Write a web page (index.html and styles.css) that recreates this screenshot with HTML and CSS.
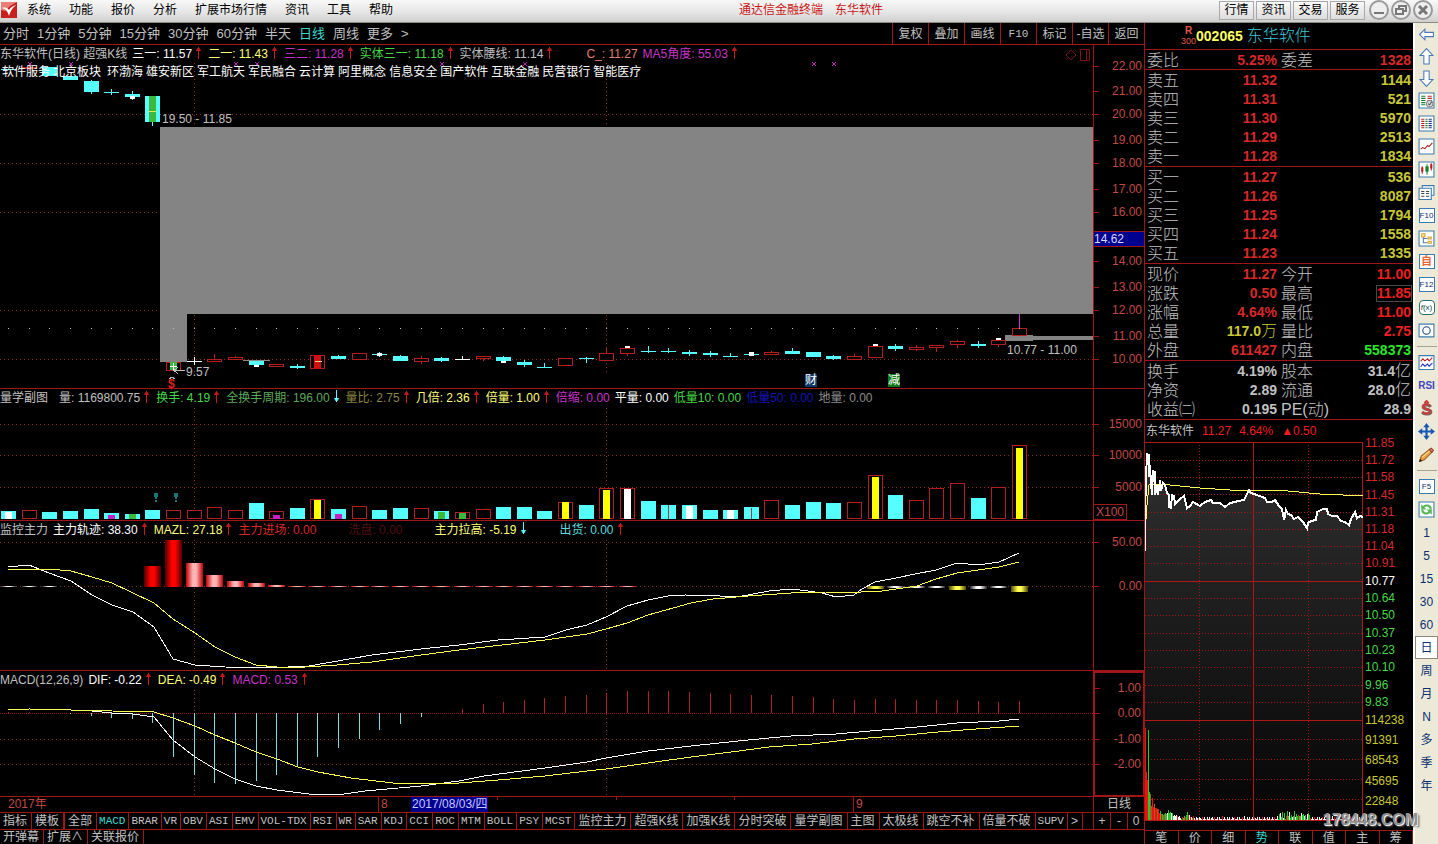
FILE: index.html
```html
<!DOCTYPE html>
<html lang="zh-CN">
<head>
<meta charset="utf-8">
<title>通达信金融终端 东华软件</title>
<link rel="stylesheet" href="styles.css">
</head>
<body>
<svg class="defs" aria-hidden="true">
  <symbol id="up" viewBox="0 0 7 13"><path d="M3.5 13V1M1.5 4.5l2-3 2 3z" fill="#c81818" stroke="#c81818"/></symbol>
  <symbol id="down" viewBox="0 0 7 13"><path d="M3.5 0v12M1.5 8.500l2 3 2-3z" fill="#5ff" stroke="#5ff"/></symbol>
</svg>
<div class="app">
  <header class="titlebar">
    <svg class="logo" viewBox="0 0 16 16"><rect width="16" height="16" fill="#c8201c"/><path d="M0 0h16L9 4 4 9 0 8z" fill="#e88078"/><path d="M1 6c3-1 6 0 7 2 2-3 4-4 7-5-4 3-6 7-7 11C7 10 5 7 1 6z" fill="#fff"/></svg>
    <nav class="menu">
      <button>系统</button><button>功能</button><button>报价</button><button>分析</button><button>扩展市场行情</button><button>资讯</button><button>工具</button><button>帮助</button>
    </nav>
    <h1 class="title"><span>通达信金融终端</span><span>东华软件</span></h1>
    <div class="modes"><button>行情</button><button>资讯</button><button>交易</button><button>服务</button></div>
    <div class="winctl">
      <button aria-label="最小化"><svg viewBox="0 0 20 20"><circle cx="10" cy="10" r="9"/><path d="M5 13h10" stroke-width="2"/></svg></button>
      <button aria-label="还原"><svg viewBox="0 0 20 20"><circle cx="10" cy="10" r="9"/><path d="M5 9h7v5H5zM8 9V6h7v5h-3" stroke-width="2"/></svg></button>
      <button aria-label="关闭"><svg viewBox="0 0 20 20"><circle cx="10" cy="10" r="9"/><path d="M6 6l8 8M14 6l-8 8" stroke-width="3"/></svg></button>
    </div>
  </header>

  <main class="main">
    <div class="periods">
      <nav class="period-list">
        <button>分时</button><button>1分钟</button><button>5分钟</button><button>15分钟</button><button>30分钟</button><button>60分钟</button><button>半天</button><button class="active">日线</button><button>周线</button><button>更多</button><button>&gt;</button>
      </nav>
      <div class="period-tools"><button>复权</button><button>叠加</button><button>画线</button><button class="song">F10</button><button>标记</button><button>-自选</button><button>返回</button></div>
    </div>

    <section class="pane price">
      <div class="plot" id="price">
        <div class="legend">
          <span>东华软件(日线) 超强K线</span>
          <span class="white">三一: 11.57<svg class="arr"><use href="#up"/></svg></span>
          <span class="yellow">二一: 11.43<svg class="arr"><use href="#up"/></svg></span>
          <span class="magenta">三二: 11.28<svg class="arr"><use href="#up"/></svg></span>
          <span class="green">实体三一: 11.18<svg class="arr"><use href="#up"/></svg></span>
          <span>实体腰线: 11.14<svg class="arr"><use href="#up"/></svg></span>
          <span class="salmon spaced">C_: 11.27</span>
          <span class="magenta">MA5角度: 55.03<svg class="arr"><use href="#up"/></svg></span>
          <svg class="corner" viewBox="0 0 28 12"><path d="M7 1l5 5-5 5-5-5zM16.500 .5h9v11h-9zM22.500 .5v11" fill="none" stroke="#801414"/></svg>
        </div>
        <div class="concepts"><span>软件服务</span><span>北京板块</span><span></span><span>环渤海</span><span>雄安新区</span><span>军工航天</span><span>军民融合</span><span>云计算</span><span>阿里概念</span><span>信息安全</span><span>国产软件</span><span>互联金融</span><span>民营银行</span><span>智能医疗</span></div>
      </div>
      <div class="axis" id="price-axis"></div>
    </section>

    <section class="pane volume">
      <div class="plot" id="volume">
        <div class="legend">
          <span>量学副图</span>
          <span class="lead">量: 1169800.75<svg class="arr"><use href="#up"/></svg></span>
          <span class="green">换手: 4.19<svg class="arr"><use href="#up"/></svg></span>
          <span class="sage">全换手周期: 196.00<svg class="arr"><use href="#down"/></svg></span>
          <span class="olive">量比: 2.75<svg class="arr"><use href="#up"/></svg></span>
          <span class="yellow">几倍: 2.36<svg class="arr"><use href="#up"/></svg></span>
          <span class="yellow">倍量: 1.00<svg class="arr"><use href="#up"/></svg></span>
          <span class="magenta">倍缩: 0.00</span>
          <span class="white">平量: 0.00</span>
          <span class="green">低量10: 0.00</span>
          <span class="blue">低量50: 0.00</span>
          <span class="gray">地量: 0.00</span>
        </div>
      </div>
      <div class="axis" id="volume-axis"><span class="unit">X100</span></div>
    </section>

    <section class="pane monitor">
      <div class="plot" id="monitor">
        <div class="legend">
          <span>监控主力</span>
          <span class="white">主力轨迹: 38.30<svg class="arr"><use href="#up"/></svg></span>
          <span class="yellow">MAZL: 27.18<svg class="arr"><use href="#up"/></svg></span>
          <span class="red">主力进场: 0.00</span>
          <span class="dark spaced">洗盘: 0.00</span>
          <span class="yellow spaced">主力拉高: -5.19<svg class="arr"><use href="#down"/></svg></span>
          <span class="cyan spaced">出货: 0.00<svg class="arr"><use href="#up"/></svg></span>
        </div>
      </div>
      <div class="axis" id="monitor-axis"></div>
    </section>

    <section class="pane macd">
      <div class="plot" id="macd">
        <div class="legend">
          <span>MACD(12,26,9)</span>
          <span class="white">DIF: -0.22<svg class="arr"><use href="#up"/></svg></span>
          <span class="yellow">DEA: -0.49<svg class="arr"><use href="#up"/></svg></span>
          <span class="magenta">MACD: 0.53<svg class="arr"><use href="#up"/></svg></span>
        </div>
      </div>
      <div class="axis" id="macd-axis"></div>
    </section>

    <div class="dates">
      <div class="dateline" id="dates"></div>
      <span class="cycle">日线</span>
    </div>

    <div class="tabs">
      <nav class="tablist" id="tabs"></nav>
      <div class="steps"><button>+</button><button>-</button><button>0</button></div>
    </div>
    <nav class="footer"><button>开弹幕</button><button>扩展∧</button><button>关联报价</button></nav>
  </main>

  <aside class="quote">
    <div class="stock"><span class="flag"><b>R</b><i>300</i></span><strong>002065</strong><span class="name">东华软件</span></div>
    <table class="book">
      <colgroup><col class="lab"><col><col class="lab"><col></colgroup>
      <tbody>
        <tr class="single"><th>委比</th><td class="red">5.25%</td><th>委差</th><td class="red">1328</td></tr>
        <tr><th>卖五</th><td class="red">11.32</td><td colspan="2" class="qty">1144</td></tr>
        <tr><th>卖四</th><td class="red">11.31</td><td colspan="2" class="qty">521</td></tr>
        <tr><th>卖三</th><td class="red">11.30</td><td colspan="2" class="qty">5970</td></tr>
        <tr><th>卖二</th><td class="red">11.29</td><td colspan="2" class="qty">2513</td></tr>
        <tr class="end"><th>卖一</th><td class="red">11.28</td><td colspan="2" class="qty">1834</td></tr>
        <tr><th>买一</th><td class="red">11.27</td><td colspan="2" class="qty">536</td></tr>
        <tr><th>买二</th><td class="red">11.26</td><td colspan="2" class="qty">8087</td></tr>
        <tr><th>买三</th><td class="red">11.25</td><td colspan="2" class="qty">1794</td></tr>
        <tr><th>买四</th><td class="red">11.24</td><td colspan="2" class="qty">1558</td></tr>
        <tr class="end"><th>买五</th><td class="red">11.23</td><td colspan="2" class="qty">1335</td></tr>
        <tr><th>现价</th><td class="red">11.27</td><th>今开</th><td class="bright">11.00</td></tr>
        <tr><th>涨跌</th><td class="red">0.50</td><th>最高</th><td class="bright"><span class="boxed">11.85</span></td></tr>
        <tr><th>涨幅</th><td class="red">4.64%</td><th>最低</th><td class="bright">11.00</td></tr>
        <tr><th>总量</th><td class="qty">117.0<small>万</small></td><th>量比</th><td class="bright">2.75</td></tr>
        <tr class="end"><th>外盘</th><td class="red">611427</td><th>内盘</th><td class="lime">558373</td></tr>
        <tr><th>换手</th><td>4.19%</td><th>股本</th><td>31.4<small>亿</small></td></tr>
        <tr><th>净资</th><td>2.89</td><th>流通</th><td>28.0<small>亿</small></td></tr>
        <tr class="end"><th>收益㈡</th><td>0.195</td><th>PE(动)</th><td>28.9</td></tr>
      </tbody>
    </table>
    <div class="mini-head"><span>东华软件</span><span class="bright">11.27</span><span class="bright">4.64%</span><span class="bright">▲0.50</span></div>
    <div class="mini">
      <div class="mini-plot" id="mini"></div>
      <div class="mini-axis" id="mini-axis"></div>
    </div>
    <nav class="quote-tabs"><button>笔</button><button>价</button><button>细</button><button class="active">势</button><button>联</button><button>值</button><button>主</button><button>筹</button></nav>
    <span class="mark">178448.COM</span>
  </aside>

  <nav class="toolbar">
    <button class="arrow" aria-label="左"><svg viewBox="0 0 16 16"><path d="M1.500 8l5-5v3h8v4h-8v3z" fill="#fff" stroke="#4a7ab8"/></svg></button>
    <button class="arrow" aria-label="上"><svg viewBox="0 0 16 16"><path d="M8 .5l6 6.500h-3.500v8h-5V7H2z" fill="#fff" stroke="#4a7ab8"/></svg></button>
    <button class="arrow" aria-label="下"><svg viewBox="0 0 16 16"><path d="M8 15.500l6-6.500h-3.500V1h-5v8H2z" fill="#fff" stroke="#4a7ab8"/></svg></button>
    <button aria-label="报表"><svg viewBox="0 0 16 16"><path d="M1 1h14v14H1z" class="fr"/><path d="M3 4h4M3 6h4M3 8h4M3 10h4M3 12h4" stroke="#188038"/><path d="M9 4h4M9 6h4" stroke="#c02020"/><path d="M9 8h4" stroke="#203080"/><circle cx="11" cy="11" r="3" fill="#ddd" stroke="#888"/><path d="M9.500 11l1.500 1 2-3" fill="none" stroke="#555"/></svg></button>
    <button aria-label="列表"><svg viewBox="0 0 16 16"><path d="M1 1h14v14H1z" class="fr"/><path d="M3 4h3M3 6h3M3 8h3M3 10h3M3 12h3" stroke="#c02020"/><path d="M7 4h2M7 6h2M7 8h2M7 10h2M7 12h2" stroke="#188038"/><path d="M10 4h3M10 6h3M10 8h3M10 10h3M10 12h3" stroke="#203080"/></svg></button>
    <button aria-label="走势"><svg viewBox="0 0 16 16"><path d="M1 1h14v14H1z" class="fr"/><path d="M2.500 10.500l2-1.500 2 1 2.500-3 1.500 1 3-3.500" fill="none" stroke="#b02020"/></svg></button>
    <button aria-label="K线"><svg viewBox="0 0 16 16"><path d="M1 1h14v14H1z" class="fr"/><path d="M4 5v7M12.500 2v7" stroke="#c01818"/><path d="M8.500 3v10" stroke="#108030"/><path d="M3 6h2v4H3zM11.500 3h2v4h-2z" fill="#d01818"/><path d="M7 5h3v5H7z" fill="#108030"/></svg></button>
    <button aria-label="窗口"><svg viewBox="0 0 16 16"><path d="M4 1.500h11v9H4z" class="fr"/><path d="M1 4h11.500v10.500H1z" class="fr"/><path d="M3 7h3M7.500 7h3M3 9h3M7.500 9h3M3 11.500h3M7.500 11.500h3" stroke="#444"/></svg></button>
    <button><span class="key">F10</span></button>
    <button aria-label="树"><svg viewBox="0 0 16 16"><path d="M1 1h14v14H1z" class="fr"/><path d="M5 6v6h4M5 8h4" fill="none" stroke="#5080b0"/><path d="M3.500 3.500h3v3h-3zM9.500 6.500h3v2h-3zM9.500 10.500h3v2h-3z" fill="#fe9" stroke="#d8a030"/></svg></button>
    <button><span class="key orange">自</span></button>
    <button><span class="key">F12</span></button>
    <button><span class="key round"><i>f</i>(x)</span></button>
    <button aria-label="圆"><svg viewBox="0 0 16 16"><path d="M1 2h14v12H1z" class="fr"/><circle cx="8" cy="8" r="3.500" fill="none" stroke="#204878"/></svg></button>
    <hr>
    <button aria-label="波动"><svg viewBox="0 0 16 16"><path d="M1 1.500h14v13H1z" class="fr"/><path d="M2.500 7l2-2.500 2 2 2.500-2 1.500 2 3-3" fill="none" stroke="#c02020"/><path d="M2.500 12l2-2.500 2 2 2.500-2 1.500 2 3-3" fill="none" stroke="#2030c0"/></svg></button>
    <button class="rsi">RSI</button>
    <button aria-label="资金"><svg viewBox="0 0 16 16"><path d="M12 6.500C10 3.500 4 4.500 5 7s7 1.500 7 4-6 3-8 .5" fill="none" stroke="#806060" stroke-width="3"/><path d="M11 5.500C9 3 4 4 5 6.500s6 1.500 6 4-5 3-7 .5M6 3l2-2 2 2" fill="none" stroke="#c84038" stroke-width="2"/></svg></button>
    <button aria-label="移动"><svg viewBox="0 0 16 16"><path d="M8 0l3 4H9v3h3V5l4 3-4 3V9H9v3h2l-3 4-3-4h2V9H4v2L0 8l4-3v2h3V4H5z" fill="#1858b0"/></svg></button>
    <button aria-label="画笔"><svg viewBox="0 0 16 16"><path d="M1.500 14.500l1.500-5L11 3l2.500 2.500L6 13z" fill="#e8a040" stroke="#a06020"/><path d="M10.500 3.500L12.500 2l2 2-1.500 2z" fill="#d88070" stroke="#a04030"/><path d="M4 10.500l7-6" stroke="#fce0a0"/><path d="M1 15l1-3 2 2z" fill="#222"/></svg></button>
    <hr>
    <button><span class="key">F5</span></button>
    <button aria-label="刷新"><svg viewBox="0 0 16 16"><path d="M1 1h14v14H1z" class="fr"/><path d="M12 8c0-4-5-5-7-2M4 8c0 4 5 5 7 2" fill="none" stroke="#58b858" stroke-width="2"/><path d="M3 3v5h5zM13 13V8H8z" fill="#58b858"/></svg></button>
    <button>1</button><button>5</button><button>15</button><button>30</button><button>60</button>
    <button class="on">日</button><button>周</button><button>月</button><button>N</button><button>多</button><button>季</button><button>年</button>
  </nav>
</div>
<script src="app.js"></script>
</body>
</html>
```

FILE: styles.css
```css
* { box-sizing: border-box; }
:root {
  --line: #a01616;
  --text: #c0c0c0;
  --axis: #c04a44;
}
body {
  margin: 0;
  background: #000;
  color: var(--text);
  font: 12px/16px "Liberation Sans", "Noto Sans CJK SC", sans-serif;
  overflow: hidden;
}
button {
  margin: 0; padding: 0; border: 0; background: none;
  color: inherit; font: inherit; white-space: nowrap; cursor: pointer;
}
.defs { display: none; }
.app {
  display: grid;
  grid-template: 23px minmax(0, 1fr) / minmax(0, 1fr) 269px 25px;
  height: 100vh;
}

/* title bar */
.titlebar {
  grid-column: 1 / -1;
  display: flex; align-items: center;
  padding: 0 5px 2px 1px;
  color: #000;
  background: linear-gradient(#f8f8f8, #e4e4e4 60%, #cfcfcf);
  border-bottom: 1px solid #8c8c84;
}
.logo { width: 16px; height: 16px; }
.menu { display: flex; gap: 18px; padding-left: 10px; }
.title {
  flex: 1; display: flex; justify-content: center; gap: 12px;
  margin: 0; padding-left: 10px;
  color: #c81818; font-size: 12px; font-weight: 400;
}
.modes { display: flex; gap: 2px; }
.modes button {
  width: 35px; height: 19px;
  border: 1px solid #a8a8a8;
  background: linear-gradient(#fafafa, #dcdcdc);
}
.winctl { display: flex; gap: 2px; padding-left: 4px; }
.winctl button, .winctl svg { display: block; width: 20px; height: 20px; }
.winctl svg { fill: none; stroke: #777; }
.winctl circle { fill: #eee; stroke: #999; stroke-width: 2; }

/* main column */
.main { display: flex; flex-direction: column; min-height: 0; }
.periods {
  display: flex; justify-content: space-between; align-items: stretch;
  height: 22px; border-bottom: 1px solid var(--line);
}
.period-list { display: flex; gap: 8px; padding-left: 3px; font-size: 13px; }
.active { color: #3cd8d0; }
.period-tools { display: flex; }
.period-tools button { width: 36px; border-left: 1px solid var(--line); }
.song { font-family: "Liberation Mono", monospace; font-size: 11px; }

.pane { display: flex; min-height: 0; border-bottom: 1px solid var(--line); }
.price { flex: 343 1 0; }
.volume { flex: 131 1 0; }
.monitor { flex: 149 1 0; }
.macd { flex: 125 1 0; }
.plot { position: relative; flex: 1; min-width: 0; }
.plot > .chart { position: absolute; inset: 0; width: 100%; height: 100%; }
.chart { display: block; shape-rendering: crispEdges; }
.axis {
  position: relative; width: 51px;
  border-left: 1px solid var(--line); color: var(--axis);
}
.macd .axis { border: 2px solid var(--line); border-right-width: 1px; border-bottom-width: 1px; }
.tick {
  position: absolute; right: 2px; left: 0;
  line-height: 14px; margin-top: -7px; text-align: right;
}
.tick::before {
  content: ""; position: absolute; left: 0; top: 7px;
  width: 5px; border-top: 1px solid var(--line);
}
.tick.cursor {
  right: 0; background: #000090; color: #d8d8ff; text-align: left;
  border: solid var(--line); border-width: 1px 0;
}
.tick.cursor::before { display: none; }
.unit {
  position: absolute; left: 0; bottom: 0;
  padding: 0 2px; line-height: 14px; border: 1px solid var(--line); border-left: 0;
}

.legend {
  position: relative; z-index: 1;
  display: flex; gap: 5px; height: 18px; line-height: 18px; white-space: nowrap;
}
.legend span { display: flex; white-space: pre; }
.legend .lead { padding-left: 6px; }
.legend .spaced { padding-left: 27px; }
.arr { width: 7px; height: 13px; margin: 1px 1px 0 3px; }
.corner { width: 28px; height: 12px; margin: 4px 1px 0 auto; }
.concepts {
  position: relative; z-index: 1;
  display: flex; gap: 3px; padding: 1px 2px; color: #fff; white-space: nowrap;
}
.white { color: #fff; } .yellow { color: #ffff78; } .magenta { color: #c832c8; }
.green { color: #46d846; } .salmon { color: #e08070; } .sage { color: #5ca85c; }
.olive { color: #8a8440; } .blue { color: #1414b4; } .gray { color: #8c8c8c; }
.red { color: #d82828; } .dark { color: #501010; } .cyan { color: #5adcdc; }
.bright { color: #f01e1e; } .lime { color: #28e628; } .qty { color: #c8c832; }

.note {
  position: absolute; z-index: 1; line-height: 14px; margin-top: -7px; white-space: nowrap;
}
.note.badge { color: #fff; line-height: 13px; }
.note.navy { background: #0c3868; }
.note.leaf { background: #107818; }
.note.dollar { color: #e02020; font-weight: 700; }

.dates { display: flex; height: 16px; border-bottom: 1px solid var(--line); }
.dateline { position: relative; flex: 1; color: var(--axis); }
.dateline span { position: absolute; top: 0; line-height: 15px; padding-left: 2px; }
.dateline .month { border-left: 1px solid var(--line); }
.dateline .picked { background: #000090; color: #c8c8ff; padding: 0 1px; }
.dateline .minor { height: 3px; border-left: 1px solid var(--line); }
.cycle { width: 51px; line-height: 15px; text-align: center; border-left: 1px solid var(--line); }

.tabs { display: flex; justify-content: space-between; height: 17px; border-bottom: 1px solid var(--line); }
.tablist { display: flex; min-width: 0; overflow: hidden; }
.tablist button, .footer button { padding: 0 4px 0 3px; border-right: 1px solid var(--line); }
.tablist .latin {
  padding: 0 3px 0 2px; font-family: "Liberation Mono", monospace; font-size: 11px;
}
.tablist .heavy { border-right-width: 2px; }
.steps { display: grid; grid-template-columns: repeat(3, 1fr); width: 51px; }
.steps button { border-left: 1px solid var(--line); }
.footer { display: flex; height: 14px; line-height: 14px; }

/* quote column */
.quote {
  position: relative; z-index: 1; display: flex; flex-direction: column; min-height: 0;
  border-left: 1px solid var(--line);
}
.stock {
  display: flex; align-items: center; height: 27px; padding-left: 36px;
  border-bottom: 1px solid var(--line);
}
.flag {
  display: flex; flex-direction: column; align-items: center;
  color: #e05848; font-size: 10px; line-height: 10px;
}
.flag i { font-style: normal; font-size: 9px; }
.stock strong { color: #ffff60; font-size: 14px; }
.name { margin-left: 4px; color: #3cc8d8; font-size: 16px; font-weight: 300; }
.book { width: 100%; table-layout: fixed; border-collapse: separate; border-spacing: 0; }
.lab { width: 50px; }
.book th, .book td { height: 19px; padding: 1px 2px 0; line-height: 17px; white-space: nowrap; }
.book th { font-size: 16px; font-weight: 300; text-align: left; }
.book td { font-size: 14px; font-weight: 700; text-align: right; }
.book small { font-size: 16px; font-weight: 300; line-height: 16px; }
.book .single > *, .book .end > * { border-bottom: 1px solid var(--line); }
.book .single > * { height: 20px; }
.book .end > * { height: 21px; }
.boxed { display: inline-block; outline: 1px solid #484848; line-height: 15px; }
.mini-head {
  display: flex; gap: 8px; height: 22px; padding-left: 1px; line-height: 22px;
}
.mini { flex: 1; display: flex; min-height: 0; }
.mini-plot { position: relative; flex: 1; min-width: 0; }
.mini-plot .chart { position: absolute; inset: 0; width: 100%; height: 100%; }
.mini-axis { position: relative; width: 50px; }
.mini-axis span { position: absolute; left: 2px; line-height: 14px; margin-top: -7px; }
.quote-tabs {
  display: grid; grid-template-columns: repeat(8, 1fr); height: 14px;
  border-top: 1px solid var(--line); overflow: hidden;
}
.quote-tabs button { line-height: 14px; border-right: 1px solid var(--line); }
.mark {
  position: absolute; right: -5px; bottom: 13px;
  font: 700 16px/22px "Liberation Sans", sans-serif;
  color: #909090; text-shadow: 1px 1px 0 #eee, 2px 2px 2px #555;
}

/* tool column */
.toolbar {
  display: flex; flex-direction: column;
  background: #ece9d8; border-left: 2px solid #fff; color: #0a3070;
}
.toolbar button {
  display: flex; align-items: center; justify-content: center;
  height: 23px; font-size: 12px;
}
.toolbar .arrow { height: 22px; }
.toolbar svg { width: 17px; height: 17px; }
.fr { fill: #fff; stroke: #3c7cac; }
.toolbar hr { width: 20px; height: 1px; margin: 4px auto; border: 0; background: #a8a494; }
.key {
  width: 16px; height: 15px; background: #fff; border: 1px solid #3c7cac;
  font-size: 8px; line-height: 13px; text-align: center;
}
.key.orange { color: #e86838; font-size: 11px; font-weight: 700; }
.key.round { border-color: #287070; border-radius: 4px; color: #104848; }
.toolbar .rsi { color: #4444c0; font-size: 10px; font-weight: 700; }
.toolbar .on { background: #fff; border: 1px solid #8c8878; }
```

FILE: app.js
```js
const STEP = 1011 / 49;
const cx = i => Math.round(8 + i * STEP);
const rect = (x, y, w, h, fill) => `<rect x="${x}" y="${y}" width="${w}" height="${h}" fill="${fill}"/>`;
const box = (x, y, w, h) => `<rect x="${x + .5}" y="${y + .5}" width="${w - 1}" height="${Math.max(h - 1, 1)}" fill="#000" stroke="#b41e1e"/>`;
const line = (x1, y1, x2, y2, s, dash) =>
  `<path d="M${x1} ${y1}L${x2} ${y2}" stroke="${s}"${dash ? ` stroke-dasharray="${dash}"` : ''}/>`;
const hDots = (y, w = 1093) => line(0, y + .5, w, y + .5, '#8c2c20', '1 3');
const vDots = (x, a, b) => line(x + .5, a, x + .5, b, '#8c2c20', '1 3');
const poly = (pts, s, w = 1) => `<polyline points="${pts}" fill="none" stroke="${s}" stroke-width="${w}"/>`;
const CYAN = '#55ffff';

function draw(id, view, body) {
  document.getElementById(id).insertAdjacentHTML('afterbegin',
    `<svg class="chart" viewBox="${view.join(' ')}" preserveAspectRatio="none">${body}</svg>`);
}
function labels(id, top, height, list) {
  document.getElementById(id).insertAdjacentHTML('beforeend', list.map(([y, t, c]) =>
    `<span class="${c || 'tick'}" style="top:${(y - top) / height * 100}%">${t}</span>`).join(''));
}

/* daily candles: colour, body top, body bottom, high, low, inner mark */
const candles = [
  ['c', 69, 70, 69, 70], ['r', 67, 69, 64, 71], ['c', 67, 76, 67, 76], ['c', 76, 80, 76, 80],
  ['c', 81, 92, 80, 94], ['c', 92, 93, 89, 95], ['c', 94, 97, 91, 100, 'w', 96, 99], ['c', 96, 122, 96, 126, 'g', 96, 122],
  ['r', 362, 371, 362, 371, 'g', 362, 370], ['w', 361, 362, 357, 365], ['r', 359, 362, 354, 362], ['r', 357, 360, 356, 360],
  ['c', 360, 365, 360, 365, 'w', 365, 367], ['r', 364, 367, 364, 367], ['c', 366, 368, 364, 369], ['r', 355, 369, 355, 369, 'R', 355, 369],
  ['c', 356, 359, 355, 359], ['r', 353, 360, 353, 360], ['c', 354, 355, 352, 357, 'w', 353, 356], ['c', 356, 361, 355, 361],
  ['r', 358, 362, 356, 364], ['c', 358, 361, 357, 362], ['w', 359, 360, 356, 360], ['r', 356, 359, 356, 361],
  ['c', 357, 361, 356, 363, 'w', 361, 363], ['c', 362, 365, 360, 367], ['c', 367, 368, 363, 368], ['r', 358, 366, 358, 366],
  ['c', 358, 359, 357, 363], ['r', 353, 361, 348, 361], ['r', 348, 354, 346, 356, 'w', 346, 348], ['c', 351, 352, 346, 353],
  ['c', 351, 352, 348, 353], ['c', 352, 354, 350, 356], ['c', 353, 355, 351, 357], ['c', 356, 357, 353, 357],
  ['c', 354, 355, 352, 356, 'w', 352, 356], ['r', 352, 355, 351, 355], ['c', 351, 354, 348, 354], ['c', 352, 357, 352, 357],
  ['c', 356, 359, 355, 360], ['r', 356, 360, 354, 360], ['r', 346, 358, 346, 358, 'w', 344, 346], ['c', 346, 349, 344, 351],
  ['r', 347, 350, 345, 351], ['r', 345, 348, 345, 352], ['r', 341, 345, 340, 348], ['c', 344, 346, 341, 348],
  ['r', 340, 345, 340, 347, 'w', 338, 340], ['r', 328, 336, 328, 336]
];
const ink = { c: CYAN, r: '#b41e1e', w: '#fff', g: '#3cb83c', R: '#d01010', y: '#ff0', m: '#c81ec8' };
let p = '';
[114, 163, 212, 310, 359].forEach(y => p += hDots(y));
[194, 606].forEach(x => p += vDots(x, 63, 373));
p += '<path d="M160 127H1093V314H187V362H160z" fill="#848484"/>';
p += rect(1005, 335, 28, 6, '#848484') + rect(1033, 336, 60, 4, '#848484');
candles.forEach(([k, t, b, h, l, m, mt, mb], i) => {
  const x = cx(i);
  p += rect(x, h, 1, l - h, ink[k]);
  p += k === 'r' ? box(x - 7, t, 15, b - t) : rect(x - 7, t, 15, b - t, ink[k]);
  if (m) p += rect(m === 'w' ? x - 2 : x - 3, mt, m === 'w' ? 5 : 7, mb - mt, ink[m]);
  p += rect(x, 328, 1, 1, '#d8b0b0');
});
p += rect(cx(7) - 3, 111, 7, 1, '#e8e840') + rect(170, 366, 7, 1, '#fff') + rect(173, 363, 1, 7, '#fff') + rect(315, 361, 7, 1, '#ffd080');
p += rect(cx(49), 314, 1, 14, '#c832c8') + rect(243, 360, 27, 1, '#888');
[30, 71, 236, 257, 442, 525, 814, 834].forEach(x =>
  p += `<path d="M${x - 2} 62l4 4M${x + 2} 62l-4 4" stroke="#b428b4" shape-rendering="auto"/>`);
p += '<path d="M185 370.500H174M178 367l-4 3.500 4 3.500M169 379l3-2 3 2" fill="none" stroke="#c0c0c0"/>';
draw('price', [0, 45, 1093, 343], p);
labels('price-axis', 45, 343, [[66, '22.00'], [91, '21.00'], [114, '20.00'], [140, '19.00'], [163, '18.00'], [189, '17.00'],
  [212, '16.00'], [238, '14.62', 'tick cursor'], [261, '14.00'], [287, '13.00'], [310, '12.00'], [336, '11.00'], [359, '10.00']]);
[[162, 119, '19.50 - 11.85', ''], [186, 372, '9.57', ''], [1007, 350, '10.77 - 11.00', ''], [168, 384, '$', 'dollar'],
 [805, 381, '财', 'badge navy'], [888, 381, '减', 'badge leaf']].forEach(([x, y, t, c]) =>
  document.getElementById('price').insertAdjacentHTML('beforeend',
    `<span class="note ${c}" style="left:${x / 1093 * 100}%;top:${(y - 45) / 343 * 100}%">${t}</span>`));

/* volume bars: colour, top, inner colour, inner top */
const volumes = [
  ['c', 511, 'w', 512], ['r', 510], ['c', 512], ['c', 511], ['c', 509], ['c', 513, 'm', 515], ['c', 514, 'g', 514], ['c', 510],
  ['r', 510], ['r', 510], ['r', 507], ['r', 510], ['c', 503], ['r', 511, 'm', 515], ['c', 508], ['r', 499, 'y', 500],
  ['c', 509, 'm', 514], ['r', 506], ['c', 510], ['c', 508], ['r', 508], ['c', 511, 'g', 512], ['r', 512, 'g', 513], ['r', 509],
  ['c', 507], ['c', 507], ['c', 511], ['r', 502, 'y', 502], ['c', 505], ['r', 488, 'y', 490], ['r', 488, 'w', 489], ['c', 501],
  ['c', 505, 'l', 505], ['c', 505, 'w', 506], ['c', 510], ['c', 510, 'w', 510], ['c', 507, 'l', 508], ['r', 500], ['c', 505],
  ['c', 502], ['c', 503], ['r', 502], ['r', 475, 'y', 477], ['c', 495], ['r', 500], ['r', 488], ['r', 483], ['c', 498],
  ['r', 487], ['r', 445, 'y', 448]
];
let v = '';
[424, 455, 487].forEach(y => v += hDots(y));
[194, 606].forEach(x => v += vDots(x, 408, 510));
volumes.forEach(([k, t, m, mt], i) => {
  const x = cx(i);
  v += k === 'r' ? box(x - 7, t, 15, 519 - t) : rect(x - 7, t, 15, 519 - t, CYAN);
  if (m === 'l') v += rect(x, mt, 1, 519 - mt, '#a04040');
  else if (m) v += rect(x - 3, mt, 7, 519 - mt, ink[m]);
});
[156, 176].forEach(x => v += rect(x - 2, 493, 4, 4, '#147878') + rect(x - 1, 497, 2, 2, '#147878') + rect(x - 1, 500, 2, 2, '#147878'));
draw('volume', [0, 389, 1093, 131], v);
labels('volume-axis', 389, 131, [[424, '15000'], [455, '10000'], [487, '5000']]);

/* main-force monitor */
const grad = (id, a, b) => `<linearGradient id="${id}"><stop stop-color="${a}"/><stop offset=".4" stop-color="${b}"/><stop offset=".6" stop-color="${b}"/><stop offset="1" stop-color="${a}"/></linearGradient>`;
let m = `<defs>${grad('gr', '#500000', '#ff0000')}${grad('gp', '#c00000', '#ffb4b4')}${grad('gy', '#504800', '#ffff50')}${grad('gw', '#222222', '#ffffff')}</defs>`;
m += hDots(542) + hDots(586) + vDots(194, 540, 669) + vDots(606, 540, 669);
[[7, 566], [8, 540]].forEach(([i, t]) => m += rect(cx(i) - 8, t, 17, 587 - t, 'url(#gr)'));
[[9, 563], [10, 575], [11, 581], [12, 583], [13, 585]].forEach(([i, t]) => m += rect(cx(i) - 8, t, 17, 587 - t, 'url(#gp)'));
for (let i = 14; i < 31; i++) m += rect(cx(i) - 8, 586, 17, 1, 'url(#gp)');
for (let i = 0; i < 3; i++) m += rect(cx(i) - 7, 586, 15, 1, 'url(#gw)');
[[42, 589, 'gy'], [43, 588, 'gw'], [44, 588, 'gw'], [45, 588, 'gw'], [46, 590, 'gy'], [47, 589, 'gw'], [48, 588, 'gw'], [49, 592, 'gy']]
  .forEach(([i, b, g]) => m += rect(cx(i) - 8, 586, 17, b - 586, `url(#${g})`));
m += poly('8,567 29,565 49,573 71,581 92,595 112,605 133,612 154,627 173,659 195,665 225,667 267,668 309,666 372,655 421,649 459,645 498,640 545,637 566,630 587,625 606,617 627,606 648,600 668,596 685,595 720,596 736,597 748,595 769,591 791,589 808,591 822,593 836,597 854,595 862,589 875,582 896,578 915,574 936,570 957,563 978,565 999,562 1019,553', '#fff');
m += poly('8,570 29,569 49,569 71,571 92,577 112,583 133,593 154,603 173,619 195,633 215,647 235,657 256,665 277,667 305,667 337,665 372,662 421,655 459,650 502,645 545,640 587,634 606,629 627,623 648,615 691,603 713,599 748,596 791,593 826,592 861,592 882,591 917,586 936,579 957,573 978,570 999,567 1019,562', '#ffff50');
draw('monitor', [0, 521, 1093, 149], m);
labels('monitor-axis', 521, 149, [[542, '50.00'], [586, '0.00']]);

/* MACD histogram end points, zero line at 713 */
const hist = [712, 712, 713, 714, 716, 718, 719, 723, 757, 775, 783, 784, 781, 775, 767, 757, 748, 739, 730, 724, 717, 713, 709,
  704, 702, 700, 698, 696, 695, 693, 691, 691, 691, 692, 693, 694, 695, 695, 696, 697, 699, 700, 699, 699, 700, 700, 700, 701, 702, 701];
let d = line(0, 713.5, 1093, 713.5, '#8c1414', '1 1') + hDots(739) + hDots(764) + vDots(194, 690, 795) + vDots(606, 690, 795);
hist.forEach((y, i) => d += y > 713 ? rect(cx(i), 713, 1, y - 713, '#78dcdc') : rect(cx(i), y, 1, 713 - y, '#b41e1e'));
d += poly('8,710 29,709 71,710 92,711 112,713 133,714 154,717 173,740 195,757 215,769 235,779 256,786 277,790 309,794 344,794 365,791 421,786 459,781 484,776 545,768 587,762 606,758 648,751 691,746 748,740 791,736 836,734 882,730 917,727 957,723 999,721 1019,719', '#fff');
d += poly('8,710 29,709 71,710 112,711 154,712 173,718 195,726 215,735 235,743 256,752 277,759 298,767 318,772 351,778 393,783 459,783 498,780 545,776 587,771 606,769 648,763 691,757 731,752 769,747 812,744 854,739 896,736 938,732 976,729 1019,726', '#ffff50');
draw('macd', [0, 671, 1093, 125], d);
labels('macd-axis', 673, 122, [[688, '1.00'], [713, '0.00'], [739, '-1.00'], [764, '-2.00']]);

document.getElementById('dates').innerHTML =
  [[6, '2017年', ''], [378, '8', 'month'], [411, '2017/08/03/四', 'picked'], [853, '9', 'month'], [497, '', 'minor'], [616, '', 'minor'], [734, '', 'minor']]
    .map(([x, t, c]) => `<span class="${c}" style="left:${x / 1093 * 100}%">${t}</span>`).join('');

document.getElementById('tabs').innerHTML =
  '指标 模板 全部 MACD BRAR VR OBV ASI EMV VOL-TDX RSI WR SAR KDJ CCI ROC MTM BOLL PSY MCST 监控主力 超强K线 加强K线 分时突破 量学副图 主图 太极线 跳空不补 倍量不破 SUPV &gt;'
    .split(' ').map((t, i) => `<button class="${/^[A-Z-]+$/.test(t) ? 'latin' : ''}${t === 'MACD' ? ' active' : ''}${i === 1 ? ' heavy' : ''}">${t}</button>`).join('');

/* intraday chart */
const price = '1145,551 1145,515 1146,478 1147,454 1149,455 1149,477 1150,465 1151,483 1152,495 1153,471 1155,472 1155,495 1157,485 1158,495 1160,480 1161,491 1163,483 1165,485 1167,493 1169,495 1169,507 1171,508 1172,495 1174,496 1175,504 1179,500 1184,496 1187,508 1190,506 1193,502 1200,506 1205,502 1211,500 1213,503 1220,503 1225,507 1230,503 1235,502 1238,501 1244,500 1249,490 1251,493 1257,495 1262,497 1265,498 1267,502 1272,502 1275,500 1279,506 1282,509 1284,520 1286,510 1288,514 1291,515 1294,519 1298,517 1303,522 1307,528 1308,523 1311,521 1316,520 1317,512 1323,509 1327,509 1328,514 1332,516 1337,516 1341,521 1345,522 1349,525 1351,519 1355,512 1357,518 1360,516 1363,517';
let n = `<defs><linearGradient id="area" x1="0" y1="0" x2="0" y2="1"><stop stop-color="#303030"/><stop offset="1" stop-color="#050505"/></linearGradient></defs>`;
n += `<path d="M1145 820L${price.split(' ').join('L')}L1363 820z" fill="url(#area)"/>`;
[460, 477, 494, 512, 529, 546, 563, 598, 615, 633, 650, 667, 685, 702, 739, 759, 779, 799]
  .forEach(y => n += line(1145, y + .5, 1363, y + .5, '#a01818', '1 2'));
[1199, 1308].forEach(x => n += line(x + .5, 442, x + .5, 820, '#a01818', '1 2'));
[442, 581, 720, 820].forEach(y => n += rect(1145, y, 218, 1, '#b01818'));
[1253, 1362].forEach(x => n += rect(x, 442, 1, 378, '#b01818'));
const vol = [92, 48, 40, 90, 28, 26, 14, 22, 13, 16, 12, 12, 11, 11, 7, 9, 6, 6, 5, 6, 7, 6, 7, 10, 7, 8, 7, 7, 4, 5, 4, 5, 4, 3, 4, 2, 1, 3, 2, 4, 3, 5, 8, 5, 5, 3, 3, 2, 4, 2, 1, 3, 2, 2];
const tint = 'rrrggoorrorrorrgrgooggwgggwgwwwwrwwwgrggrggrwrwgrwrwwr';
vol.forEach((h, i) => n += rect(1145 + i, 820 - h, 1, h, { r: '#f01010', g: '#28c828', o: '#a06020', w: '#fff' }[tint[i]]));
for (let i = 54; i < 216; i++) {
  const h = 1 + (i * 7 % 5 > 2 ? 2 : 0) + (i % 11 === 0 ? 1 : 0) + (i > 132 && i < 165 ? i * 3 % 7 : 0) + (i > 198 && i < 206 ? 3 : 0);
  n += rect(1145 + i, 820 - h, 1, h, i > 132 && i < 165 && i % 3 ? '#28c828' : ['#fff', '#f01010', '#fff', '#fff'][i % 4]);
}
n += poly('1145,533 1147,505 1149,485 1152,484 1170,485 1200,488 1230,490 1277,490 1320,494 1343,495 1363,496', '#ffff50');
n += poly(price, '#fff', 2);
draw('mini', [1145, 442, 218, 388], n);
labels('mini-axis', 442, 388, [
  ...['11.85', '11.72', '11.58', '11.45', '11.31', '11.18', '11.04', '10.91'].map((t, i) => [443 + i * 17.2, t, 'red']),
  [581, '10.77', 'white'],
  ...['10.64', '10.50', '10.37', '10.23', '10.10', '9.96', '9.83'].map((t, i) => [598 + i * 17.3, t, 'green']),
  ...['114238', '91391', '68543', '45695', '22848'].map((t, i) => [720 + i * 20.2, t, 'qty'])
]);
```
